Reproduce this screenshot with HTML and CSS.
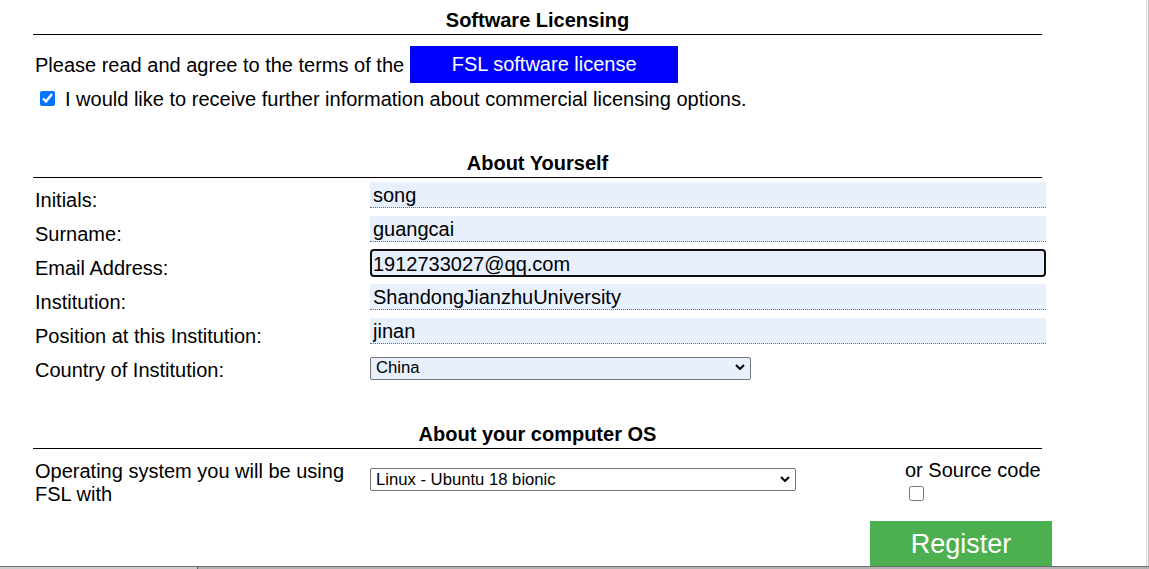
FILE: index.html
```html
<!DOCTYPE html>
<html lang="en">
<head>
<meta charset="utf-8">
<title>FSL Registration</title>
<link rel="stylesheet" href="styles.css">
</head>
<body>
<form class="page">
  <h2 class="section-title title-first">Software Licensing</h2>
  <div class="agree-row">
    <span class="agree-text">Please read and agree to the terms of the</span>
    <a class="license-btn" href="#">FSL software license</a>
  </div>
  <label class="info-row"><input class="check" type="checkbox" checked><span>I would like to receive further information about commercial licensing options.</span></label>

  <h2 class="section-title title-about">About Yourself</h2>
  <div class="fields">
    <label class="field-label">Initials:</label>
    <input class="field" type="text" value="song">
    <label class="field-label">Surname:</label>
    <input class="field" type="text" value="guangcai">
    <label class="field-label">Email Address:</label>
    <input class="field field-focus" type="text" value="1912733027@qq.com">
    <label class="field-label">Institution:</label>
    <input class="field" type="text" value="ShandongJianzhuUniversity">
    <label class="field-label">Position at this Institution:</label>
    <input class="field" type="text" value="jinan">
    <label class="field-label">Country of Institution:</label>
    <div class="select-wrap select-country">
      <select class="select select-filled"><option>China</option></select>
      <svg class="chevron" width="10" height="6" viewBox="0 0 10 6"><path d="M1 1 L5 5 L9 1" fill="none" stroke="#000" stroke-width="2"/></svg>
    </div>
  </div>

  <h2 class="section-title title-os">About your computer OS</h2>
  <div class="os-row">
    <label class="os-label">Operating system you will be using FSL with</label>
    <div class="select-wrap select-os">
      <select class="select"><option>Linux - Ubuntu 18 bionic</option></select>
      <svg class="chevron" width="10" height="6" viewBox="0 0 10 6"><path d="M1 1 L5 5 L9 1" fill="none" stroke="#000" stroke-width="2"/></svg>
    </div>
    <div class="source">or Source code<input class="check source-check" type="checkbox"></div>
  </div>
  <div class="actions"><button class="register" type="button">Register</button></div>
</form>
<div class="hscroll"></div>
<div class="vedge"></div>
</body>
</html>
```
FILE: styles.css
```css
* { box-sizing: border-box; }
html, body { margin: 0; height: 100%; }
body {
  font-family: "Liberation Sans", Arial, sans-serif;
  font-size: 20px;
  color: #000;
  background: #fff;
  overflow: hidden;
}
.page { width: 1009px; margin-left: 33px; }

.section-title {
  margin: 0;
  font-size: 20px;
  font-weight: bold;
  line-height: 23px;
  text-align: center;
  padding-bottom: 2px;
  border-bottom: 1px solid #000;
}
.title-first { margin-top: 9px; }
.title-about { margin-top: 42px; }
.title-os { margin-top: 41px; }

.agree-row { display: flex; align-items: center; height: 37px; margin-top: 11px; }
.agree-text { padding: 2px 0 0 2px; line-height: 23px; }
.license-btn {
  display: flex; align-items: center; justify-content: center;
  width: 268px; height: 37px; margin-left: 6px;
  background: #0000ff; color: #fff; text-decoration: none; line-height: 23px;
}

.info-row { display: flex; align-items: center; height: 23px; margin-top: 4px; line-height: 23px; }
.info-row span { padding-top: 2px; }
.check { width: 15px; height: 15px; margin: 0; }
.info-row .check { margin: 0 10px 0 7px; }

.fields { display: grid; grid-template-columns: 337px 676px; grid-auto-rows: 34px; }
.field-label { padding: 11px 0 0 2px; line-height: 23px; }
.field {
  margin-top: 4px; height: 26px; width: 676px;
  border: 0; border-bottom: 1px dotted #6b6b7a;
  background: #e8f0fe; color: #000;
  font-family: inherit; font-size: 20px; padding: 2px 3px 0; outline: none;
}
.field-focus {
  margin-top: 3px; height: 28px;
  border: 2px solid #101010; border-radius: 4px; padding: 2px 0 0 1px;
}

.select-wrap { position: relative; align-self: start; justify-self: start; height: 23px; }
.select-country { width: 381px; margin-top: 7px; }
.select-os { width: 426px; margin-top: 18px; }
.select {
  -webkit-appearance: none; appearance: none;
  width: 100%; height: 100%;
  border: 1px solid #767676; border-radius: 2px;
  background: #fff; color: #000;
  font-family: inherit; font-size: 16.67px;
  padding: 0 24px 0 5px; margin: 0;
}
.select-country .select { padding-bottom: 1px; }
.select-filled { background: #e8f0fe; }
.chevron { position: absolute; right: 6px; top: 9px; }

.os-row { display: grid; grid-template-columns: 337px 535px 1fr; }
.os-label { padding: 11px 0 0 2px; line-height: 23px; }
.source { padding-top: 10px; line-height: 23px; white-space: nowrap; }
.source-check { display: block; margin: 4px 0 0 4px; }

.actions { display: flex; justify-content: flex-end; width: 1019px; margin-top: 15px; }
.register {
  width: 182px; padding: 8px 0; border: 0; margin: 0;
  background: #4caf50; color: #fff;
  font-family: inherit; font-size: 27px; line-height: 31px;
}

.hscroll {
  position: fixed; left: 0; right: 0; bottom: 0; height: 3px;
  border-top: 1px solid #6e6e6e;
  background: linear-gradient(to right, #cdcdcd 0, #cdcdcd 197px, #5a5a5a 197px, #5a5a5a 198px, #b2b2b2 198px);
}
.vedge {
  position: fixed; top: 0; right: 0; bottom: 3px; width: 3px;
  border-left: 1px solid #dcdcdc; border-right: 1px solid #c4c4c4; background: #f4f4f4;
}
```
